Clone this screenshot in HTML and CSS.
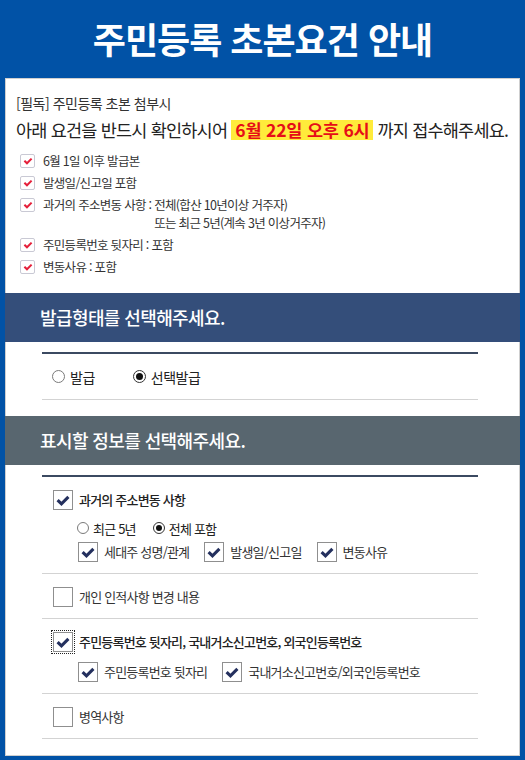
FILE: index.html
```html
<!DOCTYPE html>
<html lang="ko">
<head>
  <meta charset="UTF-8" />
  <meta name="viewport" content="width=device-width, initial-scale=1.0"/>
  <title>주민등록 초본요건 안내</title>
  <link rel="stylesheet" href="styles.css">
</head>
<body>
  <svg class="defs" width="0" height="0">
    <symbol id="tick" viewBox="0 0 20 20">
      <path d="M4 9.5 L8.3 13.8 L16 6" fill="none" stroke="currentColor" stroke-width="3.4"/>
    </symbol>
  </svg>

  <h1 class="title">주민등록 초본요건 안내</h1>

  <div class="panel">
    <div class="notice">
      <p class="lead">[필독] 주민등록 초본 첨부시</p>
      <p class="deadline">아래 요건을 반드시 확인하시어 <span class="hl">6월 22일 오후 6시</span> 까지 접수해주세요.</p>
      <ul class="req">
        <li><span class="mini"><svg><use href="#tick"/></svg></span><span>6월 1일 이후 발급본</span></li>
        <li><span class="mini"><svg><use href="#tick"/></svg></span><span>발생일/신고일 포함</span></li>
        <li><span class="mini"><svg><use href="#tick"/></svg></span><span>과거의 주소변동 사항 :&nbsp;</span><span>전체(합산 10년이상 거주자)<br>또는 최근 5년(계속 3년 이상거주자)</span></li>
        <li><span class="mini"><svg><use href="#tick"/></svg></span><span>주민등록번호 뒷자리 : 포함</span></li>
        <li><span class="mini"><svg><use href="#tick"/></svg></span><span>변동사유 : 포함</span></li>
      </ul>
    </div>

    <h2 class="sec-head">발급형태를 선택해주세요.</h2>
    <div class="opts">
      <div class="type-row">
        <label class="radio"><span class="dot"></span>발급</label>
        <label class="radio on"><span class="dot"></span>선택발급</label>
      </div>
    </div>

    <h2 class="sec-head gray">표시할 정보를 선택해주세요.</h2>
    <div class="opts">
      <div class="opt">
        <label class="chk main on"><span class="box"><svg><use href="#tick"/></svg></span>과거의 주소변동 사항</label>
        <div class="sub radios">
          <label class="radio small"><span class="dot"></span>최근 5년</label>
          <label class="radio small on"><span class="dot"></span>전체 포함</label>
        </div>
        <div class="sub">
          <label class="chk on"><span class="box"><svg><use href="#tick"/></svg></span>세대주 성명/관계</label>
          <label class="chk on"><span class="box"><svg><use href="#tick"/></svg></span>발생일/신고일</label>
          <label class="chk on"><span class="box"><svg><use href="#tick"/></svg></span>변동사유</label>
        </div>
      </div>

      <div class="opt">
        <label class="chk main"><span class="box"></span>개인 인적사항 변경 내용</label>
      </div>

      <div class="opt">
        <label class="chk main on"><span class="box focus"><svg><use href="#tick"/></svg></span>주민등록번호 뒷자리, 국내거소신고번호, 외국인등록번호</label>
        <div class="sub gap">
          <label class="chk on"><span class="box"><svg><use href="#tick"/></svg></span>주민등록번호 뒷자리</label>
          <label class="chk on"><span class="box"><svg><use href="#tick"/></svg></span>국내거소신고번호/외국인등록번호</label>
        </div>
      </div>

      <div class="opt">
        <label class="chk main"><span class="box"></span>병역사항</label>
      </div>
    </div>
  </div>
</body>
</html>
```

FILE: styles.css
```css
* {
  margin: 0;
  padding: 0;
  box-sizing: border-box;
}

html, body {
  height: 100%;
}

body {
  background: #0152a6;
  font-family: "Noto Sans CJK KR", "Noto Sans", sans-serif;
  color: #333;
  overflow: hidden;
}

.defs {
  position: absolute;
}

.title {
  height: 78px;
  line-height: 76px;
  text-align: center;
  color: #fff;
  font-size: 36px;
  font-weight: 700;
  letter-spacing: -1px;
}

.panel {
  margin: 0 5px;
  height: 678px;
  background: #fff;
  border: 1px solid #cfcfcf;
}

/* notice block */
.notice {
  padding: 13px 10px 17px;
}

.lead {
  font-size: 14px;
  line-height: 22px;
  letter-spacing: -0.5px;
}

.deadline {
  margin-top: 3px;
  font-size: 17.5px;
  line-height: 26px;
  letter-spacing: -0.8px;
  color: #222;
}

.hl {
  display: inline-block;
  line-height: 20px;
  padding: 0 4px;
  background: #ffeb3b;
  color: #e60d17;
  font-weight: 700;
  letter-spacing: -0.2px;
}

.req {
  list-style: none;
  margin-top: 9px;
  padding-left: 4px;
  display: flex;
  flex-direction: column;
  gap: 4px;
}

.req li {
  display: flex;
  align-items: flex-start;
  font-size: 12.5px;
  line-height: 18px;
  letter-spacing: -0.7px;
}

.mini {
  flex: none;
  width: 15px;
  height: 14px;
  margin: 2px 8px 0 0;
  border: 1px solid #c9c9d4;
  border-radius: 2px;
  color: #e5203a;
  display: flex;
  align-items: center;
  justify-content: center;
}

.mini svg {
  width: 12px;
  height: 12px;
}

/* section headers */
.sec-head {
  margin: 0 -1px;
  height: 49px;
  padding-left: 35px;
  line-height: 48px;
  background: #344e7a;
  color: #fff;
  font-size: 18px;
  font-weight: 500;
  letter-spacing: -0.6px;
}

.sec-head.gray {
  background: #58666f;
}

.opts {
  margin: 10px 41px 16px 36px;
  border-top: 2px solid #3b4a61;
}

.type-row {
  height: 46px;
  display: flex;
  align-items: center;
  gap: 38px;
  padding-left: 10px;
  border-bottom: 1px solid #d3d3d3;
}

/* radio buttons */
.radio {
  display: flex;
  align-items: center;
  gap: 5px;
  font-size: 14px;
  letter-spacing: -0.5px;
  color: #222;
}

.radio .dot {
  width: 13px;
  height: 13px;
  border: 1px solid #7a7a7a;
  border-radius: 50%;
  display: flex;
  align-items: center;
  justify-content: center;
}

.radio.on .dot {
  border-color: #333;
}

.radio.on .dot::after {
  content: '';
  width: 7px;
  height: 7px;
  border-radius: 50%;
  background: #111;
}

.radio.small {
  font-size: 13px;
  letter-spacing: -0.8px;
  gap: 4px;
}

.radio.small .dot {
  width: 12px;
  height: 12px;
}

.radio.small.on .dot::after {
  width: 6px;
  height: 6px;
}

/* checkbox options */
.opt {
  padding: 13px 0 11px 11px;
  border-bottom: 1px solid #d3d3d3;
}

.chk {
  display: flex;
  align-items: center;
  gap: 6px;
  font-size: 13px;
  line-height: 20px;
  letter-spacing: -0.8px;
  color: #333;
}

.chk.main.on {
  font-weight: 500;
  color: #222;
}

.box {
  flex: none;
  width: 20px;
  height: 20px;
  border: 1px solid #8f8f8f;
  background: #fff;
  color: #24305e;
  display: flex;
  align-items: center;
  justify-content: center;
}

.box svg {
  width: 19px;
  height: 19px;
}

.box.focus {
  outline: 1px dotted #222;
  outline-offset: 1px;
}

.sub {
  display: flex;
  align-items: center;
  gap: 15px;
  padding-left: 25px;
  margin-top: 6px;
}

.sub.radios {
  margin-top: 10px;
  height: 16px;
  gap: 17px;
  padding-left: 24px;
}

.sub.gap {
  margin-top: 10px;
}
```
